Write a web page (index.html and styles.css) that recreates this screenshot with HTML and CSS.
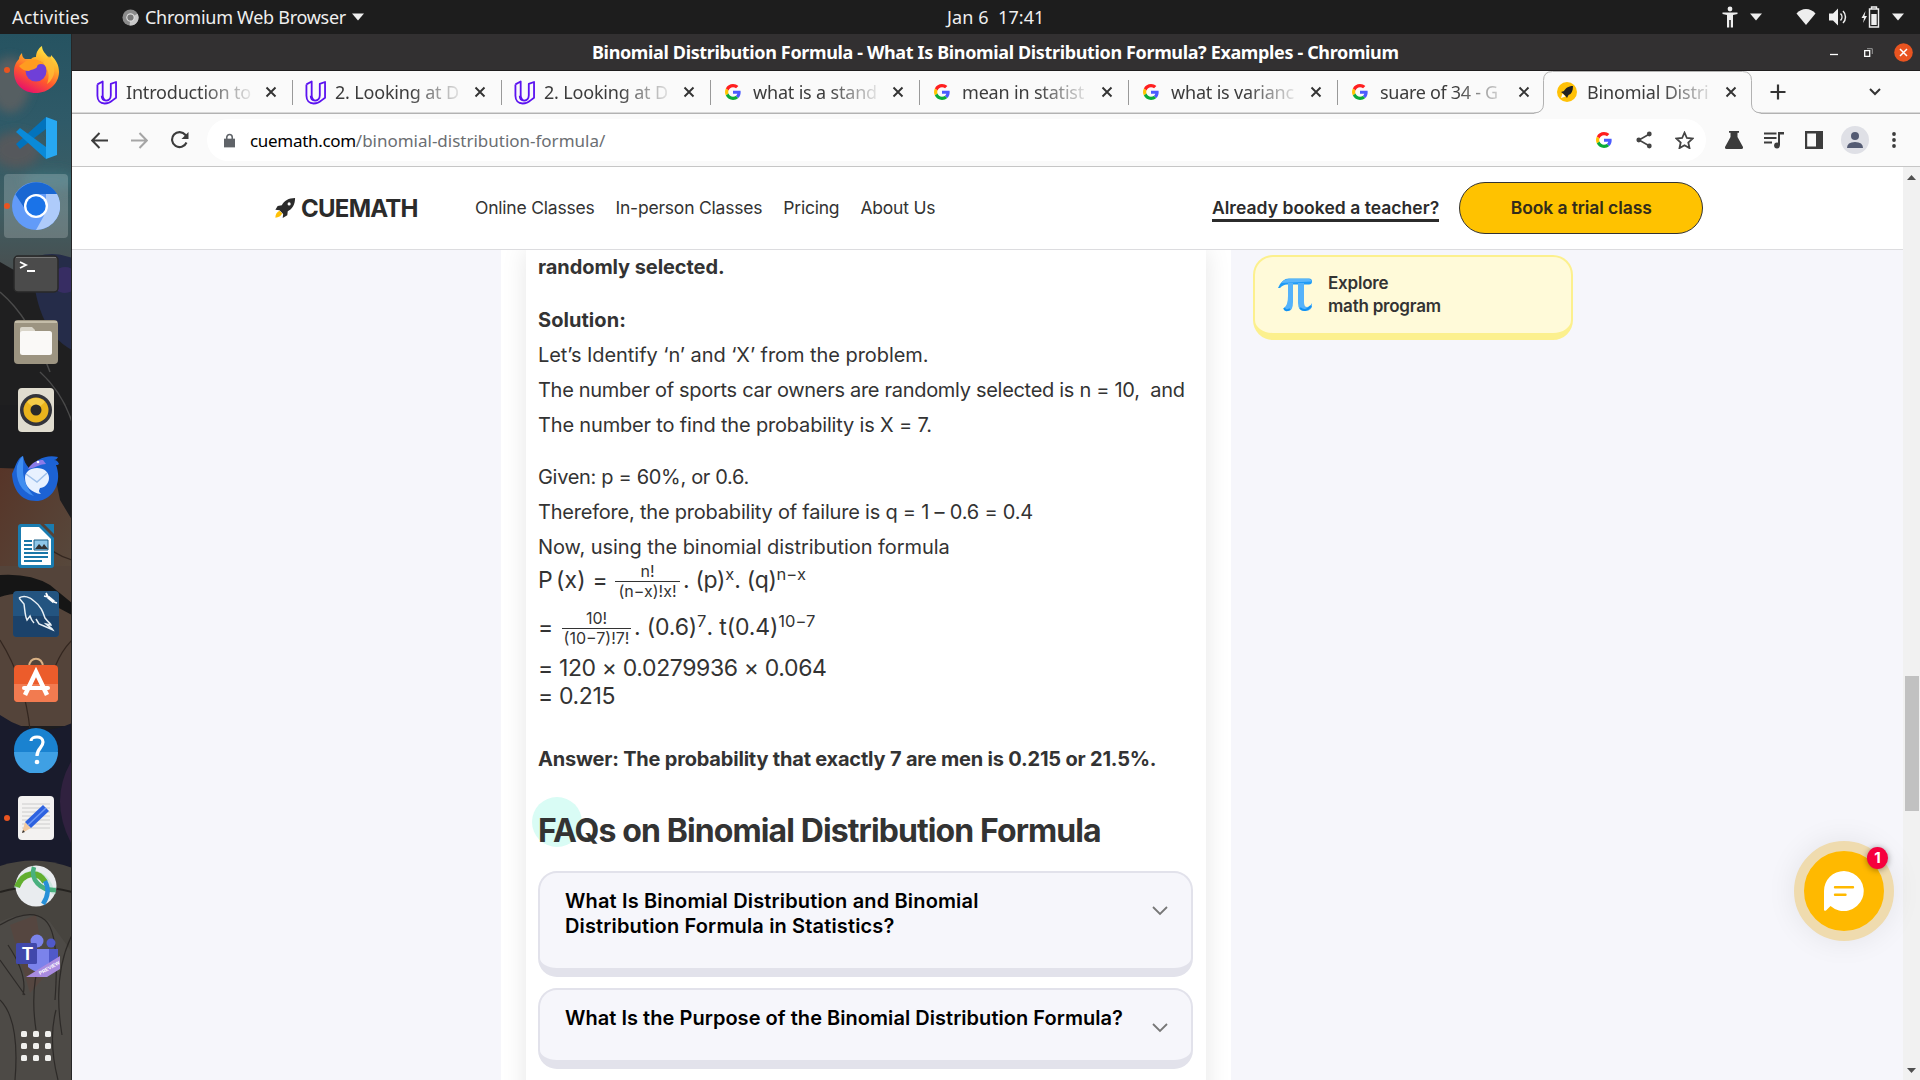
FILE: index.html
```html
<!DOCTYPE html>
<html lang="en">
<head>
<meta charset="utf-8">
<title>Binomial Distribution Formula</title>
<link rel="stylesheet" href="styles.css">
</head>
<body>
<svg class="defs" width="0" height="0" aria-hidden="true">
  <defs>
    <symbol id="udemy" viewBox="0 0 22 26">
      <path d="M1.500 4.500 7 1.500v14c0 3 1 5 3.500 6 M1.500 4.500v12c0 5 3 8 7.500 8s7-2 8-3l4-3V2l-5.500 2v12c0 3-2 5.500-5 5.500s-4.500-2-4.500-5 M15.500 4v12" fill="none" stroke="#5b12f0" stroke-width="1.900" stroke-linejoin="round"/>
    </symbol>
    <symbol id="google" viewBox="0 0 48 48">
      <path fill="#ff1f1f" d="M24 9.500c3.500 0 6.700 1.200 9.200 3.600l6.900-6.900C35.900 2.400 30.500 0 24 0 14.600 0 6.500 5.400 2.600 13.200l8 6.200C12.400 13.700 17.700 9.500 24 9.500z"/>
      <path fill="#4b5bff" d="M47 24.600c0-1.600-.2-3.100-.4-4.600H24v9h12.900c-.6 3-2.300 5.500-4.800 7.200l7.700 6C44.400 38 47 31.800 47 24.600z"/>
      <path fill="#ffc400" d="M10.500 28.600c-.5-1.500-.8-3-.8-4.600s.3-3.100.8-4.600l-8-6.200C.9 16.500 0 20.100 0 24s.9 7.500 2.600 10.800z"/>
      <path fill="#0bab38" d="M24 48c6.500 0 11.900-2.100 15.900-5.800l-7.700-6c-2.200 1.500-4.900 2.300-8.200 2.300-6.300 0-11.600-4.200-13.500-9.900l-8 6.200C6.500 42.600 14.600 48 24 48z"/>
    </symbol>
    <symbol id="close" viewBox="0 0 12 12"><path d="M1.500 1.500l9 9M10.500 1.500l-9 9" stroke="#333" stroke-width="1.900"/></symbol>
    <symbol id="rocket" viewBox="0 0 24 24">
      <path d="M23 1C16 1 11 4 8.500 9L4 9.800 1.500 14l4.500.5 4 4-.5 4.500 5-3 .5-4.500C20 13 23 8 23 1z"/>
    </symbol>
    <symbol id="caret" viewBox="0 0 12 8"><path d="M0 .5h12L6 7.500z" fill="#eee"/></symbol>
    <symbol id="chev" viewBox="0 0 16 10"><path d="M1 1l7 7 7-7" fill="none" stroke="#777" stroke-width="1.800"/></symbol>
  </defs>
</svg>

<header class="topbar">
  <div class="topbar-left">
    <span class="activities">Activities</span>
    <svg width="17" height="17" viewBox="0 0 18 18"><circle cx="9" cy="9" r="8.500" fill="#8b8b8b"/><path d="M9 9 16.500 5A8.500 8.500 0 0 1 8 17.500z" fill="#c9c9c9"/><circle cx="9" cy="9" r="4.500" fill="#ddd"/><circle cx="9" cy="9" r="3.300" fill="#777"/></svg>
    <span class="app-name">Chromium Web Browser</span>
    <svg width="12" height="8"><use href="#caret"/></svg>
  </div>
  <div class="clock">Jan 6&nbsp; 17:41</div>
  <div class="topbar-right">
    <svg width="16" height="22" viewBox="0 0 16 22"><circle cx="8" cy="3" r="2.400" fill="#eee"/><path d="M.5 6.500h15v1.600l-4.500.9V21.500H8.800V14H7.200v7.500H5V9L.5 8.100z" fill="#eee"/></svg>
    <svg class="a11y-caret" width="12" height="8"><use href="#caret"/></svg>
    <svg class="wifi" width="20" height="16" viewBox="0 0 20 16"><path d="M10 16 .5 4.500C3 1.500 6.500 0 10 0s7 1.500 9.500 4.500z" fill="#eee"/></svg>
    <svg class="sound" width="20" height="18" viewBox="0 0 20 18"><path d="M0 5.500h4L9 .5v17l-5-5H0z" fill="#eee"/><path d="M11.500 5.500a5 5 0 0 1 0 7M14 3a8.500 8.500 0 0 1 0 12" fill="none" stroke="#eee" stroke-width="1.500"/></svg>
    <svg class="battery" width="19" height="22" viewBox="0 0 19 22"><path d="M4.500 5 .5 12H3l-1 5 4-7H3.500z" fill="#eee"/><path d="M8.500 3h9v18h-9z M10.500 1h5v2h-5z" fill="none" stroke="#eee" stroke-width="1.400"/><path d="M10.300 8h5.400v11h-5.400z" fill="#eee"/></svg>
    <svg width="12" height="8"><use href="#caret"/></svg>
  </div>
</header>

<div class="desktop">
  <nav class="dock">
    <svg class="wallpaper" width="72" height="1046" viewBox="0 34 72 1046" preserveAspectRatio="none">
      <defs>
        <linearGradient id="sky" x1="0" y1="0" x2="0" y2="1"><stop offset="0" stop-color="#265361"/><stop offset=".35" stop-color="#2f5a68"/><stop offset=".7" stop-color="#3f5e63"/><stop offset="1" stop-color="#4a4b4b"/></linearGradient>
        <linearGradient id="skin" x1="0" y1="0" x2="1" y2="1"><stop offset="0" stop-color="#573528"/><stop offset="1" stop-color="#574a3e"/></linearGradient>
        <filter id="soft"><feGaussianBlur stdDeviation="5"/></filter>
      </defs>
      <rect y="34" width="72" height="1046" fill="#1d1d1f"/>
      <rect y="34" width="72" height="250" fill="url(#sky)"/>
      <g filter="url(#soft)"><ellipse cx="10" cy="85" rx="20" ry="28" fill="#565e62"/><ellipse cx="16" cy="150" rx="24" ry="18" fill="#55595b"/><ellipse cx="50" cy="180" rx="28" ry="10" fill="#3a6a73"/></g>
      <path d="M0 262 40 285 72 345v60H0z" fill="#1f1f20"/>
      <path d="M32 258q20-8 40 0v92q-38-20-40-92z" fill="#252c49"/>
      <circle cx="65" cy="280" r="13" fill="#372d63"/>
      <path d="M0 292q30 25 50 80M40 372q22 20 32 50" fill="none" stroke="#4a4a4a" stroke-width="1.500"/>
      <path d="M0 468 54 470 60 500 72 520v70H0z" fill="url(#skin)"/>
      <path d="M0 566h72v160H0z" fill="#54443a"/>
      <path d="M0 575q30-2 50 10l22 18v12l-30-16q-20-10-42-2z" fill="#151515"/>
      <path d="M0 640q25 40 30 90M72 640q-20 20-25 60M40 540q14 15 32 20" fill="none" stroke="#33261f" stroke-width="1.200"/>
      <path d="M0 715q36 25 72 8v165H0z" fill="#191b2c"/>
      <path d="M72 760q-24 40 0 85z" fill="#30213f"/>
      <path d="M0 866q36-12 72 2v212H0z" fill="#47443f"/>
      <path d="M0 892q36-10 72 0" fill="none" stroke="#24221f" stroke-width="2"/>
      <path d="M10 925l26-10 10 60-16 18z" fill="#5d382e"/>
      <path d="M0 922q30-15 50 0l22 30v128H0z" fill="#524e49" opacity=".65"/>
      <path d="M0 925q30-18 45-5t10 80M8 945q20 30 15 50M0 1000q20 20 15 80M72 935q-20 40-10 100M40 960q-10 30-4 70M58 1080q-10-40-2-70M0 960l25 35" fill="none" stroke="#1f1d1b" stroke-width="1.200" opacity=".7"/>
    </svg>
    <ul class="launchers">
      <li class="running"><svg width="48" height="48" viewBox="0 0 48 48">
        <defs><linearGradient id="ff" x1=".8" y1="0" x2=".3" y2="1"><stop offset="0" stop-color="#fff44f"/><stop offset=".35" stop-color="#ffb02a"/><stop offset=".65" stop-color="#ff5a2c"/><stop offset="1" stop-color="#e60e6d"/></linearGradient></defs>
        <path d="M24 47C11 47 2 38 2 26c0-6 2-10 5-13 0-2 1-4 3-6 0 3 1 5 3 6h6c2-2 4-2 5-2 0-5 3-9 6-11 0 5 4 8 7 12 2-1 2-2 2-3 5 5 8 10 8 17 0 12-11 21-23 21z" fill="url(#ff)"/>
        <circle cx="24" cy="25" r="10.500" fill="#6f3fd8"/><path d="M14 15c5-2 14-3 19 4-4-2-8-1-8 2-2 3-6 2-8 4-4 0-8-2-10-5z" fill="#ff9c20"/><path d="M37 10c8 9 7 22-2 28 3-7 2-15-4-21z" fill="#ffbd35" opacity=".8"/></svg></li>
      <li><svg width="44" height="44" viewBox="0 0 44 44"><path d="M2 28 32 1v12L6 33z" fill="#0273bc"/><path d="M2 16l4-4 26 19v12z" fill="#0a8ad8"/><path d="M32 1l11 4v34l-11 4z" fill="#27a8f2"/></svg></li>
      <li class="running current"><svg width="48" height="48" viewBox="0 0 48 48"><circle cx="24" cy="24" r="24" fill="#629bf8"/><path d="M3.500 12.500A24 24 0 0 1 45 12H24L13 27z" fill="#1967d2"/><path d="M45 12A24 24 0 0 1 24 48l10-18V12z" fill="#aecbfa"/><circle cx="24" cy="24" r="12" fill="#fff"/><circle cx="24" cy="24" r="9.700" fill="#1a73e8"/></svg></li>
      <li><svg width="46" height="38" viewBox="0 0 46 38"><rect x="1" y="1" width="44" height="36" rx="4" fill="#4b4b4b" stroke="#282828" stroke-width="1.500"/><path d="M3 2.500h40" stroke="#777"/><path d="M7 7l6 3-6 3M14 16h8" fill="none" stroke="#fff" stroke-width="1.800"/></svg></li>
      <li><svg width="46" height="46" viewBox="0 0 46 46"><rect x="1" y="1" width="44" height="44" rx="4" fill="#9c9481"/><path d="M2 3h42" stroke="#c4bda9" stroke-width="2"/><path d="M7 10q0-2 2-2h10l3 3v5H7z" fill="#d9d5c9"/><rect x="7" y="12" width="32" height="24" rx="2.500" fill="#faf9f7"/></svg></li>
      <li><svg width="38" height="46" viewBox="0 0 38 46"><rect x="1" y="1" width="36" height="44" rx="4" fill="#e0dccf"/><circle cx="19" cy="23" r="16" fill="#33343b"/><circle cx="19" cy="23" r="12.500" fill="#eab41d"/><path d="M19 23 10 15a12 12 0 0 1 18 0z" fill="#f5cc48"/><circle cx="19" cy="23" r="5.500" fill="#2a2a2a"/></svg></li>
      <li><svg width="50" height="48" viewBox="0 0 50 48"><path d="M1 20C4 14 6 4 12 2c1 5 3 9 6 12 6-8 17-14 29-11-1 2-2 3-4 3 3 0 4 2 5 4-1 1-2 1-3 1 7 18-4 36-20 36C10 47 2 36 1 20z" fill="#1c62d4"/><path d="M12 2c1 8-1 14 1 22 2 8 6 14 10 18C10 38 4 26 6 12 8 7 9 4 12 2z" fill="#3f8df0"/><path d="M17 15c4-7 10-9 15-9l3 4c-6 0-8 3-18 5z" fill="#8b7be8"/><path d="M14 24c0-6 5-10 12-10s12 4 12 10-5 10-9 10c-1 3-2 3 1 6-9-1-16-7-16-16z" fill="#e8f1ff"/><path d="M15 20l11 8 10-9" fill="none" stroke="#9fc0ea" stroke-width="1.500"/><circle cx="27" cy="8" r="1.300" fill="#fff"/></svg></li>
      <li><svg width="38" height="46" viewBox="0 0 38 46"><path d="M4 1h19l14 14v27q0 3-3 3H4q-3 0-3-3V4q0-3 3-3z" fill="#1a7cb0"/><path d="M5 4h17l12 12v26H5q-1 0-1-1V5q0-1 1-1z" fill="#fff"/><path d="M27 1h10v10z" fill="#1a7cb0"/><path d="M7 18h8M7 22h8M7 26h8M7 30h24M7 34h24M7 38h18" stroke="#1a77a8" stroke-width="2"/><path d="M17 17h14v10H17z" fill="#8fc7e8" stroke="#1a5f86"/><path d="M18 26l4-5 3 3 2-3 4 5z" fill="#333"/></svg></li>
      <li><svg width="48" height="48" viewBox="0 0 48 48"><rect x="1" y="1" width="46" height="46" rx="4" fill="#235480"/><path d="M1 26h46v17q0 4-4 4H5q-4 0-4-4z" fill="#1b426a"/><path d="M7 8c5-3 11-1 15 3 7 5 9 11 11 17 3 4 6 6 6 7l-5-1c2 2 6 4 7 6l-9-4-5-2-3-5M7 8l5 6c1 7 1 12 3 16l3-4c1 3 3 6 4 7" fill="none" stroke="#e8f0f5" stroke-width="1.500"/><path d="M36 7l6 5" stroke="#fff" stroke-width="3"/><path d="M34 3l2 4-4-1M45 13l-3-1" stroke="#fff" stroke-width="1.800" fill="none"/></svg></li>
      <li class="software"><svg width="46" height="46" viewBox="0 0 46 46"><path d="M16 10c0-11 14-11 14 0" fill="none" stroke="#d9b184" stroke-width="2"/><rect x="1" y="8" width="44" height="37" rx="4" fill="#ec5c2b"/><path d="M1 27h44v14q0 4-4 4H5q-4 0-4-4z" fill="#f27b50"/><path d="M12 38 23 15l11 23" fill="none" stroke="#fff" stroke-width="4.500"/><path d="M11 31h24" stroke="#fff" stroke-width="4" stroke-linecap="round"/></svg></li>
      <li><svg width="46" height="46" viewBox="0 0 46 46"><circle cx="23" cy="23" r="22" fill="#1a82d0"/><path d="M1 25h44a22 22 0 0 1-44 0z" fill="#3fa0e4"/><path d="M18 14c0-5 12-6 12 1 0 6-6 6-6 14" fill="none" stroke="#fff" stroke-width="3.200"/><circle cx="24" cy="35" r="2.300" fill="#fff"/></svg></li>
      <li class="running"><svg width="38" height="46" viewBox="0 0 38 46"><rect x="1" y="1" width="36" height="44" rx="4" fill="#f3f2f1"/><path d="M5 9h28M5 13h28M5 17h28M5 21h28M5 25h28M5 29h28M5 33h28" stroke="#ccc"/><path d="M5 38l3-11 6 6z" fill="#f0c9a0"/><path d="M5 38l1-3 2 2z" fill="#333"/><path d="M8 27 26 10l6 6-18 17z" fill="#2d62e0"/><path d="M11 30 29 13" stroke="#6d98f4" stroke-width="1.500"/></svg></li>
      <li><svg width="44" height="44" viewBox="0 0 44 44"><circle cx="22" cy="22" r="20.500" fill="#e9ecef"/><path d="M2 24C5 11 18 4 29 12s7 18 12 16" fill="none" stroke="#bfe2d8" stroke-width="4" opacity=".7"/><path d="M3 23C9 8 24 6 31 18" fill="none" stroke="#62af2f" stroke-width="6"/><path d="M20 3c-4 12 6 24 22 23" fill="none" stroke="#49b07e" stroke-width="4.500"/><path d="M31 17c4 7 4 14-2 23" fill="none" stroke="#2790d8" stroke-width="4.500"/></svg></li>
      <li class="teams"><svg width="48" height="44" viewBox="0 0 48 44"><circle cx="24" cy="7" r="6.500" fill="#7b83eb"/><circle cx="38" cy="9" r="4.500" fill="#5059c9"/><path d="M31 15h14v14q-6 10-14 3z" fill="#5059c9"/><path d="M15 15h21v18q-9 10-21 0z" fill="#7b83eb"/><rect x="3" y="9" width="21" height="21" rx="1.500" fill="#4048ab"/><path d="M13 43 47 22v13L34 43z" fill="#a98be0"/><text x="9" y="26" class="teams-t">T</text><text x="27" y="41" transform="rotate(-29 27 41)" class="teams-p">PREVIEW</text></svg></li>
    </ul>
    <div class="apps-grid"><i></i><i></i><i></i><i></i><i></i><i></i><i></i><i></i><i></i></div>
  </nav>

  <section class="window">
    <div class="titlebar">
      <span class="window-title">Binomial Distribution Formula - What Is Binomial Distribution Formula? Examples - Chromium</span>
      <div class="window-buttons">
        <svg width="8" height="12" viewBox="0 0 8 12"><path d="M0 8.500h8" stroke="#fff" stroke-width="1.300"/></svg>
        <svg width="9" height="9" viewBox="0 0 9 9"><path d="M.7 2.700h5v5.600h-5z" fill="none" stroke="#fff" stroke-width="1.300"/><path d="M3 .7h5.300V6" fill="none" stroke="#999"/></svg>
        <svg width="19" height="19" viewBox="0 0 19 19"><circle cx="9.500" cy="9.500" r="9.300" fill="#e95420"/><path d="M6 6l7 7M13 6l-7 7" stroke="#fff" stroke-width="1.500"/></svg>
      </div>
    </div>

    <div class="tabs">
      <div class="tab"><svg class="fav-u" width="21" height="25"><use href="#udemy"/></svg><span>Introduction to</span><svg width="12" height="12"><use href="#close"/></svg></div>
      <div class="tab"><svg class="fav-u" width="21" height="25"><use href="#udemy"/></svg><span>2. Looking at D</span><svg width="12" height="12"><use href="#close"/></svg></div>
      <div class="tab"><svg class="fav-u" width="21" height="25"><use href="#udemy"/></svg><span>2. Looking at D</span><svg width="12" height="12"><use href="#close"/></svg></div>
      <div class="tab"><svg class="fav-g" width="16" height="16"><use href="#google"/></svg><span>what is a stand</span><svg width="12" height="12"><use href="#close"/></svg></div>
      <div class="tab"><svg class="fav-g" width="16" height="16"><use href="#google"/></svg><span>mean in statist</span><svg width="12" height="12"><use href="#close"/></svg></div>
      <div class="tab"><svg class="fav-g" width="16" height="16"><use href="#google"/></svg><span>what is varianc</span><svg width="12" height="12"><use href="#close"/></svg></div>
      <div class="tab last"><svg class="fav-g" width="16" height="16"><use href="#google"/></svg><span>suare of 34 - G</span><svg width="12" height="12"><use href="#close"/></svg></div>
      <div class="tab active">
        <svg class="tab-shape" width="227" height="43" viewBox="0 0 227 43"><path d="M0 42.500q9.500-.5 9.500-9V9.500q0-9 9-9h190q9 0 9 9v24q0 8.500 9.500 9v1H0z" fill="#fafafa"/><path d="M0 42q9.500-.5 9.500-9V9.500q0-9 9-9h190q9 0 9 9V33q0 8.500 9.500 9" fill="none" stroke="#b2b2b2"/></svg>
        <svg class="fav-c" width="20" height="20" viewBox="0 0 20 20"><circle cx="10" cy="10" r="10" fill="#ffc107"/><path d="M16 4c-5 0-7.500 2.500-9 5l-3 1 2 1.500 2.500 2.500 1.500 2 1.500-3C14.500 12 16 9 16 4z" fill="#222"/><path d="M5.500 11.500l-1.500 4.500L8.500 14.500z" fill="#fff"/></svg><span>Binomial Distri</span><svg width="12" height="12"><use href="#close"/></svg></div>
      <svg class="new-tab" width="16" height="16" viewBox="0 0 16 16"><path d="M8 .5v15M.5 8h15" stroke="#333" stroke-width="2.200"/></svg>
      <svg class="tab-search" width="12" height="8" viewBox="0 0 12 8"><path d="M1 1l5 5 5-5" fill="none" stroke="#333" stroke-width="2"/></svg>
    </div>

    <div class="toolbar">
      <svg width="17" height="17" viewBox="0 0 17 17"><path d="M17 8.500H1.500M8.500 1 1.200 8.500l7.300 7.500" fill="none" stroke="#3c3c3c" stroke-width="2"/></svg>
      <svg width="17" height="17" viewBox="0 0 17 17"><path d="M0 8.500h15.500M8.500 1l7.300 7.500L8.500 16" fill="none" stroke="#a5a5a5" stroke-width="2"/></svg>
      <svg width="18" height="18" viewBox="0 0 18 18"><path d="M15.500 11.500A7.500 7.500 0 1 1 14.500 4l1.500 2" fill="none" stroke="#3c3c3c" stroke-width="2.100"/><path d="M17.500 1v7h-7z" fill="#3c3c3c"/></svg>
      <div class="omnibox">
        <svg width="11" height="15" viewBox="0 0 12 15"><path d="M0 5.500h12V15H0z" fill="#5f6368"/><path d="M3 6V4a3 3 0 0 1 6 0v2" fill="none" stroke="#5f6368" stroke-width="1.700"/></svg>
        <div class="url"><span class="host">cuemath.com</span><span class="path">/binomial-distribution-formula/</span></div>
        <div class="omni-actions">
          <svg width="16" height="16"><use href="#google"/></svg>
          <svg width="16" height="18" viewBox="0 0 16 18"><path d="M13.500 3 3 9l10.500 6" fill="none" stroke="#444" stroke-width="1.600"/><circle cx="13.300" cy="3" r="2.400" fill="#444"/><circle cx="2.800" cy="9" r="2.400" fill="#444"/><circle cx="13.300" cy="15" r="2.400" fill="#444"/></svg>
          <svg width="19" height="18" viewBox="0 0 20 19"><path d="M10 1.800l2.500 5.600 6 .6-4.500 4.100 1.300 6L10 15l-5.300 3.100 1.300-6L1.500 8l6-.6z" fill="none" stroke="#444" stroke-width="1.900"/></svg>
        </div>
      </div>
      <div class="tool-actions">
        <svg width="18" height="18" viewBox="0 0 18 18"><path d="M4 0h10v1.800h-1.500V6L18 16q.3 2-1.500 2h-15Q-.3 18 0 16L5.500 6V1.800H4z" fill="#3c3c3c"/></svg>
        <svg width="20" height="17" viewBox="0 0 20 17"><path d="M0 1.500h12.500M0 6h12.500M0 10.500h8" stroke="#3c3c3c" stroke-width="2"/><path d="M14 0h6v2.500h-4V13h-2z" fill="#3c3c3c"/><circle cx="13" cy="13.500" r="2.900" fill="#3c3c3c"/></svg>
        <svg width="18" height="18" viewBox="0 0 18 18"><path d="M0 0h18v18H0z M2.200 2.500v13H11v-13z" fill="#3c3c3c" fill-rule="evenodd"/></svg>
        <svg width="28" height="28" viewBox="0 0 28 28"><circle cx="14" cy="14" r="14" fill="#dfe0e6"/><circle cx="14" cy="10" r="4" fill="#545b73"/><path d="M6 22q0-6 8-6t8 6z" fill="#545b73"/></svg>
        <svg width="4" height="16" viewBox="0 0 4 16"><circle cx="2" cy="2" r="1.900" fill="#3c3c3c"/><circle cx="2" cy="8" r="1.900" fill="#3c3c3c"/><circle cx="2" cy="14" r="1.900" fill="#3c3c3c"/></svg>
      </div>
    </div>

    <div class="viewport">
      <div class="page">
        <header class="site-header">
          <div class="logo">
            <svg width="22" height="22" viewBox="0 0 24 24"><use href="#rocket" fill="#2b2b2b"/><circle cx="16.500" cy="7.500" r="1.700" fill="#fff"/><path d="M6 15c-3 1.500-4.500 4-4.500 7.500C5 22.500 7.500 21 9 18z" fill="#ffc107"/></svg>
            <span>CUEMATH</span>
          </div>
          <nav class="site-nav"><a>Online Classes</a><a>In-person Classes</a><a>Pricing</a><a>About Us</a></nav>
          <a class="booked">Already booked a teacher?</a>
          <a class="cta">Book a trial class</a>
        </header>
        <main class="body">
          <div class="column">
            <article class="sheet">
              <p class="line bold s1">randomly selected.</p>
              <p class="line bold gap s2">Solution:</p>
              <p class="line s3">Let’s Identify ‘n’ and ‘X’ from the problem.</p>
              <p class="line s4">The number of sports car owners are randomly selected is n = 10,&nbsp; and</p>
              <p class="line s5">The number to find the probability is X = 7.</p>
              <p class="line gap s6">Given: p = 60%, or 0.6.</p>
              <p class="line s7">Therefore, the probability of failure is q = 1 – 0.6 = 0.4</p>
              <p class="line s3">Now, using the binomial distribution formula</p>
              <div class="math first"><span class="lhs">P<i></i>(x) =</span><span class="frac f1"><span>n!</span><span>(n−x)!x!</span></span><span class="rhs1">. (p)<sup>x</sup>. (q)<sup>n−x</sup></span></div>
              <div class="math"><span class="eq">=</span><span class="frac f2"><span>10!</span><span>(10−7)!7!</span></span><span class="rhs2">. (0.6)<sup>7</sup>. t(0.4)<sup>10−7</sup></span></div>
              <div class="math plain">= 120 × 0.0279936 × 0.064</div>
              <div class="math plain">= 0.215</div>
              <p class="line bold answer">Answer: The probability that exactly 7 are men is 0.215 or 21.5%.</p>
              <h2>FAQs on Binomial Distribution Formula</h2>
              <div class="faq two"><h3>What Is Binomial Distribution and Binomial<br>Distribution Formula in Statistics?</h3><svg width="16" height="10"><use href="#chev"/></svg></div>
              <div class="faq"><h3 class="long">What Is the Purpose of the Binomial Distribution Formula?</h3><svg width="16" height="10"><use href="#chev"/></svg></div>
            </article>
          </div>
          <aside class="explore">
            <svg width="36" height="36" viewBox="0 0 36 36"><path d="M1 11Q5 1.500 12 1.500h20q3 0 3 3t-3 3H10Q6 7.500 3 11z" fill="#1f9bf6"/><path d="M11 6h5v19q0 9-5 9-4 0-4-3 4-3 4-12zM21 6h6v19q0 5 3 5 3 0 5-4 1 8-7 8-7 0-7-8z" fill="#55b2fa"/><path d="M7 31q2 4 6 1M23 31q5 5 11-2" stroke="#1091f2" stroke-width="2" fill="none"/><path d="M4 6q3-4 8-4h20q2.500 0 2.500 2.500z" fill="#5bb6fb"/></svg>
            <p>Explore<br>math program</p>
          </aside>
        </main>
        <div class="chat">
          <svg width="40" height="40" viewBox="0 0 40 40"><path d="M20 0a20 20 0 1 1-13.500 35L2 39.500q-2 1-2-1V20A20 20 0 0 1 20 0z" fill="#fff"/><path d="M11 16.300h18M11 23.700h10.500" stroke="#ffb900" stroke-width="2.400" stroke-linecap="round"/></svg>
          <span class="badge">1</span>
        </div>
      </div>
      <div class="scrollbar">
        <svg width="9" height="5"><path d="M4.500 0 9 5H0z" fill="#505050"/></svg>
        <div class="thumb"></div>
        <svg class="down" width="9" height="5"><path d="M0 0h9L4.500 5z" fill="#505050"/></svg>
      </div>
    </div>
  </section>
</div>
</body>
</html>
```
FILE: styles.css
```css
* { box-sizing: border-box; }
body {
  margin: 0;
  width: 1920px;
  height: 1080px;
  overflow: hidden;
  display: flex;
  flex-direction: column;
  font-family: "Noto Sans", sans-serif;
  font-size: 18px;
}
svg { display: block; flex: none; }
.defs { position: absolute; }
p, h2, h3, ul { margin: 0; padding: 0; }

/* GNOME top bar */
.topbar {
  height: 34px;
  background: #1d1d1d;
  color: #efefef;
  display: grid;
  grid-template-columns: 947px 110px 1fr;
  align-items: center;
  line-height: 34px;
}
.topbar-left { display: flex; align-items: center; padding-left: 12px; }
.activities { width: 110px; letter-spacing: .2px; }
.app-name { margin: 0 6px 0 6px; letter-spacing: -.276px; }
.clock { letter-spacing: .08px; white-space: nowrap; }
.topbar-right { display: flex; align-items: center; justify-content: flex-end; padding-right: 16px; }
.a11y-caret { margin: 0 34px 0 12px; }
.sound { margin: 0 12px 0 13px; }
.battery { margin-right: 12px; }

.desktop { flex: 1; display: flex; min-height: 0; }

/* Dock */
.dock { position: relative; width: 72px; flex: none; overflow: hidden; border-right: 1px solid #262626; }
.wallpaper { position: absolute; left: 0; top: 0; }
.launchers { position: relative; list-style: none; padding-top: 2px; }
.launchers li { position: relative; height: 68px; display: flex; align-items: center; justify-content: center; padding-left: 1px; }
.launchers .software { padding-bottom: 5px; }
.launchers .teams { padding: 4px 0 0 3px; }
.current::after {
  content: "";
  position: absolute;
  inset: 2px 3px 2px 4px;
  border-radius: 4px;
  background: rgba(255, 255, 255, .2);
}
.current svg { position: relative; z-index: 1; }
.running::before {
  content: "";
  position: absolute;
  z-index: 2;
  left: 4px;
  top: 31px;
  width: 6px;
  height: 6px;
  border-radius: 50%;
  background: #e95420;
}
.apps-grid {
  position: relative;
  margin: 43px 21px 0;
  display: grid;
  grid-template-columns: repeat(3, 6px);
  gap: 6px;
}
.apps-grid i { height: 6px; border-radius: 1.500px; background: #f0f0ee; }
.teams-t { font: 700 18px "Liberation Sans", sans-serif; fill: #fff; }
.teams-p { font: 700 5px "Liberation Sans", sans-serif; fill: #fff; }

/* Browser frame */
.window { flex: 1; display: flex; flex-direction: column; min-width: 0; }
.titlebar {
  height: 37px;
  background: #323031;
  border-bottom: 1px solid #1f1d1e;
  color: #fff;
  display: flex;
  align-items: center;
  padding-left: 520px;
}
.window-title { width: 1238px; font-weight: 700; line-height: 36px; letter-spacing: -.36px; white-space: nowrap; }
.window-buttons { display: flex; align-items: center; gap: 24px; }
.window-buttons svg:first-child { margin-right: 2px; }
.window-buttons svg:last-child { margin-left: -3px; }

.tabs {
  height: 43px;
  background: #fafafa;
  border-bottom: 1px solid #b2b2b2;
  box-shadow: inset 0 -1px #d8d8d8;
  display: flex;
  align-items: center;
  padding-left: 11px;
}
.tab { position: relative; width: 209px; height: 42px; flex: none; display: flex; align-items: center; padding-left: 13px; }
.tab:not(.last):not(.active)::after {
  content: "";
  position: absolute;
  right: -1px;
  top: 9px;
  width: 1px;
  height: 25px;
  background: #999;
}
.tab.last, .tab.active { width: 207px; }
.tab.last span { letter-spacing: -.3px; }
.tab span {
  position: relative;
  width: 130px;
  white-space: nowrap;
  color: #3c3c3c;
  line-height: 42px;
  letter-spacing: -.18px;
  -webkit-mask-image: linear-gradient(90deg, #000 58%, rgba(0, 0, 0, .1) 96%);
  mask-image: linear-gradient(90deg, #000 58%, rgba(0, 0, 0, .1) 96%);
}
.tab svg:last-child { position: relative; margin-left: 9px; }
.tab.last svg:last-child, .tab.active svg:last-child { margin-left: 8px; }
.fav-u { margin-right: 9px; }
.fav-g { margin: 0 12px 0 2px; }
.fav-c { position: relative; margin-right: 10px; }
.tab-shape { position: absolute; left: -10px; top: 0; }
.new-tab { margin-left: 19px; }
.tab-search { margin-left: 83px; }

.toolbar { height: 53px; background: #fafafa; border-bottom: 1px solid #c6c6c6; display: flex; align-items: center; padding-left: 19px; gap: 23px; }
.omnibox { width: 1499px; height: 42px; margin-left: -5px; border-radius: 21px; background: #fff; display: flex; align-items: center; padding: 0 12px 0 17px; }
.url { margin-left: 15px; flex: 1; display: flex; line-height: 42px; font-size: 17px; padding-top: 1px; }
.host { color: #000; letter-spacing: -.31px; }
.path { color: #6b6e72; letter-spacing: -.01px; }
.omni-actions { display: flex; align-items: center; gap: 24px; }
.omni-actions svg:last-child { margin-left: -1px; }
.tool-actions { display: flex; align-items: center; gap: 21px; margin-left: -4px; }
.tool-actions svg:nth-child(4) { margin-left: -3px; }
.tool-actions svg:last-child { margin-left: 2px; }

/* Web page */
.viewport { flex: 1; display: flex; min-height: 0; font-family: Inter, "Liberation Sans", sans-serif; color: #333; }
.page { position: relative; flex: 1; display: flex; flex-direction: column; min-width: 0; }
.site-header { height: 83px; flex: none; background: #fff; border-bottom: 1px solid #dcdcdf; display: flex; align-items: center; padding-left: 202px; font-size: 17.500px; }
.logo { width: 201px; display: flex; align-items: center; gap: 5px; font: 700 24px Inter, sans-serif; letter-spacing: -.75px; color: #2b2b2b; }
.site-nav { width: 737px; display: flex; gap: 21px; letter-spacing: -.21px; padding-bottom: 1px; }
.booked { font-weight: 600; color: #2b2b2b; border-bottom: 3px solid #2b2b2b; line-height: 23px; margin-top: 2px; letter-spacing: .03px; }
.cta { margin-left: 20px; width: 244px; height: 52px; border: 1px solid #333; border-radius: 26px; background: #ffc200; color: #332c1a; font-weight: 600; letter-spacing: -.09px; line-height: 50px; text-align: center; }
.body { flex: 1; min-height: 0; overflow: hidden; background: #f6f6fb; display: flex; align-items: flex-start; padding-left: 429px; }
.column { width: 730px; height: 830px; background: #fff; padding: 0 25px; overflow: hidden; }
.sheet { width: 680px; height: 900px; background: #fff; padding: 0 13px 0 12px; box-shadow: 0 0 24px rgba(0, 0, 0, .1); }
.line { font-size: 20px; line-height: 35px; white-space: nowrap; }
.gap { margin-top: 17.500px; }
.bold { font-weight: 700; }
.s1 { letter-spacing: -.08px; }
.s2 { letter-spacing: .06px; }
.s3 { letter-spacing: -.06px; }
.s4 { letter-spacing: -.3px; }
.s5 { letter-spacing: -.17px; }
.s6 { letter-spacing: -.32px; }
.s7 { letter-spacing: -.21px; }
.answer { margin-top: 32px; letter-spacing: -.2px; }
.math { height: 47px; display: flex; align-items: center; font-size: 23px; line-height: 28px; letter-spacing: -.37px; white-space: pre; }
.math.first { margin-top: -7px; }
.math.plain { height: 28px; }
.math.plain:nth-of-type(3) { margin-top: 2px; }
.lhs { width: 77px; letter-spacing: .2px; padding-bottom: 4px; }
.lhs i { margin-right: 3px; }
.eq { width: 24px; padding-bottom: 4px; }
.frac { display: flex; flex-direction: column; align-items: center; font-size: 16px; line-height: 19px; letter-spacing: 0; }
.frac span:first-child { width: 100%; text-align: center; border-bottom: 1px solid #333; }
.f1 { width: 65px; }
.f2 { width: 69px; }
.rhs1, .rhs2 { margin-left: 3px; padding-bottom: 4px; }
.rhs1 { letter-spacing: -.3px; }
.rhs2 { letter-spacing: -.15px; }
.math sup { font-size: 16.500px; line-height: 0; vertical-align: 8px; letter-spacing: .1px; }
h2 {
  position: relative;
  z-index: 0;
  margin: 34px 0 20px;
  font-size: 32px;
  line-height: 40px;
  letter-spacing: -.9px;
  white-space: nowrap;
}
h2::before {
  content: "";
  position: absolute;
  z-index: -1;
  left: -6px;
  top: -14px;
  width: 50px;
  height: 50px;
  border-radius: 50%;
  background: #d9fcf5;
}
.faq {
  width: 655px;
  height: 81px;
  margin-bottom: 11px;
  padding: 16px 23px 0 25px;
  border: 2px solid #e2e2eb;
  border-bottom-width: 9px;
  border-radius: 19px;
  background: #f6f6fb;
  display: flex;
  justify-content: space-between;
}
.faq.two { height: 106px; }
.faq svg { margin-top: 17px; }
h3 { font-size: 20px; line-height: 25px; font-weight: 600; color: #000; letter-spacing: .15px; white-space: nowrap; }
h3.long { letter-spacing: .04px; }
.explore {
  width: 320px;
  height: 85px;
  margin: 5px 0 0 22px;
  padding: 0 0 1px 22px;
  border: 2px solid #fcf08e;
  border-bottom-width: 7px;
  border-radius: 20px;
  background: #fffad9;
  display: flex;
  align-items: center;
  gap: 15px;
  font-size: 17px;
  line-height: 23px;
  font-weight: 600;
  letter-spacing: -.22px;
}
.chat {
  position: absolute;
  right: 9px;
  bottom: 139px;
  width: 100px;
  height: 100px;
  border: 10px solid #efdbae;
  border-radius: 50%;
  background: #ffb900;
  display: flex;
  align-items: center;
  justify-content: center;
  box-shadow: 0 0 30px rgba(0, 0, 0, .08);
}
.badge {
  position: absolute;
  right: -4px;
  top: -4px;
  width: 21px;
  height: 22px;
  border-radius: 50%;
  background: #f6003e;
  color: #fff;
  font-size: 15px;
  font-weight: 700;
  line-height: 21px;
  text-align: center;
  box-shadow: 0 1px 6px rgba(0, 0, 0, .4);
}
.scrollbar { width: 17px; background: #f1f1f1; display: flex; flex-direction: column; align-items: center; padding: 8px 0 7px; }
.thumb { width: 14px; height: 135px; margin-top: 496px; background: #c1c1c1; }
.down { margin-top: auto; }
```
